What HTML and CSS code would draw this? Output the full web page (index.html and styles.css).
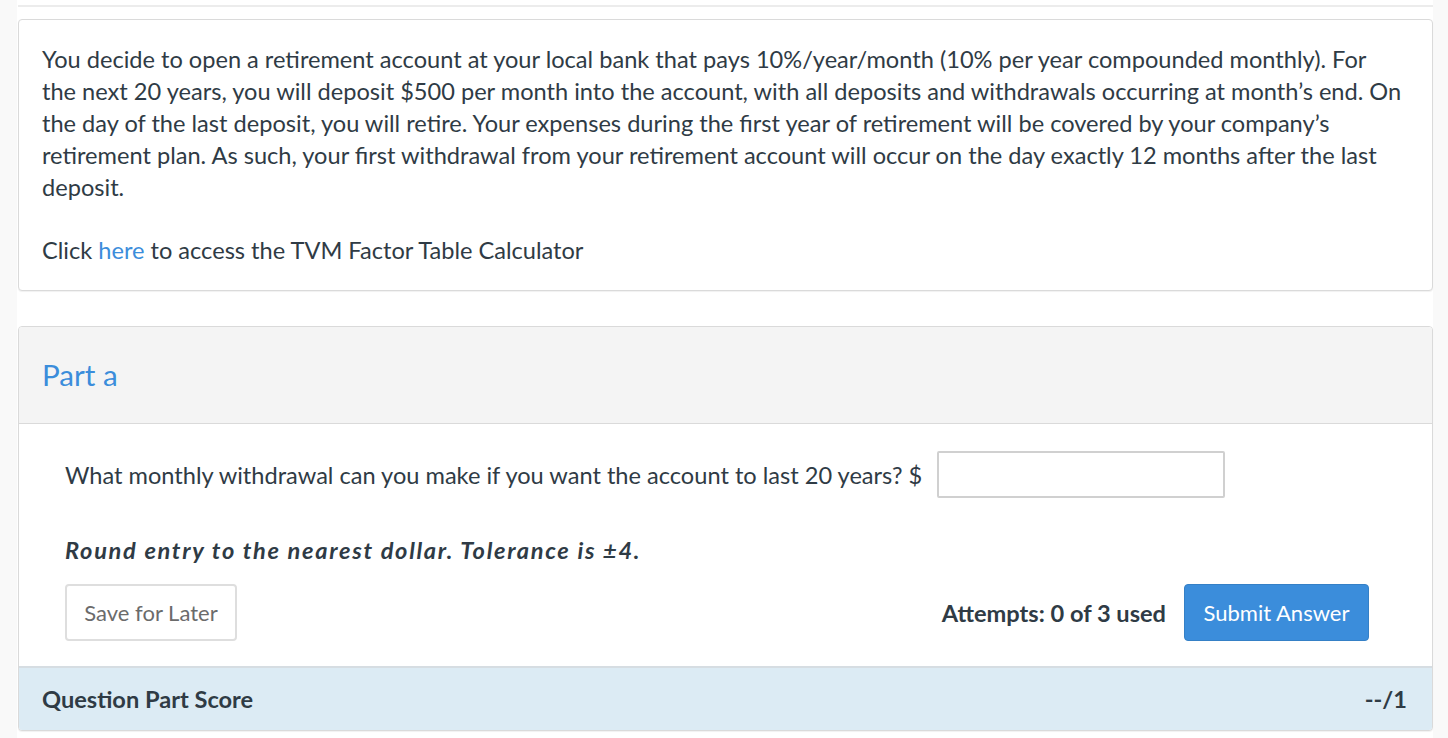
FILE: index.html
```html
<!DOCTYPE html>
<html>
<head>
<meta charset="utf-8">
<link rel="stylesheet" href="styles.css">
</head>
<body>
<div class="page">
  <div class="topline"></div>
  <div class="card intro">
    <p>You decide to open a retirement account at your local bank that pays 10%/year/month (10% per year compounded monthly). For the next 20 years, you will deposit $500 per month into the account, with all deposits and withdrawals occurring at month’s end. On the day of the last deposit, you will retire. Your expenses during the first year of retirement will be covered by your company’s retirement plan. As such, your first withdrawal from your retirement account will occur on the day exactly 12 months after the last deposit.</p>
    <p class="click">Click <a href="#">here</a> to access the TVM Factor Table Calculator</p>
  </div>
  <div class="card part">
    <div class="part-head">Part a</div>
    <div class="part-body">
      <div class="question">
        <span>What monthly withdrawal can you make if you want the account to last 20 years? $</span>
        <input class="answer" type="text">
      </div>
      <div class="note">Round entry to the nearest dollar. Tolerance is ±4.</div>
      <div class="actions">
        <button class="btn save">Save for Later</button>
        <div class="right">
          <span class="attempts">Attempts: 0 of 3 used</span>
          <button class="btn submit">Submit Answer</button>
        </div>
      </div>
    </div>
    <div class="score">
      <span>Question Part Score</span>
      <span>--/1</span>
    </div>
  </div>
</div>
</body>
</html>
```
FILE: styles.css
```css
html, body {
  margin: 0;
  padding: 0;
  background: #f9f9f9;
}
body {
  font-family: Lato, "Open Sans", sans-serif;
  color: #2f3b45;
  font-size: 23.6px;
}
.page {
  margin: 0 15px 0 17px;
  background: #fff;
  min-height: 738px;
  padding: 5px 0 0 1px;
  box-sizing: border-box;
}
.topline {
  height: 2px;
  background: #ececec;
}
.card {
  border: 1px solid #dadada;
  border-radius: 4px;
  box-shadow: 0 1px 1px rgba(0,0,0,0.06);
  background: #fff;
}
.intro {
  margin-top: 12px;
  padding: 23px 28px 24px 23px;
}
.intro p {
  margin: 0;
  line-height: 32px;
}
.intro .click {
  margin-top: 31px;
}
.intro a {
  color: #3b8ddb;
  text-decoration: none;
}
.part {
  margin-top: 35px;
  overflow: hidden;
}
.part-head {
  background: #f4f4f4;
  border-bottom: 1px solid #dadada;
  height: 96px;
  line-height: 96px;
  padding-left: 23px;
  font-size: 29.6px;
  color: #3b8ddb;
}
.part-body {
  padding: 27px 63px 25px 46px;
}
.question {
  display: flex;
  align-items: center;
  gap: 15px;
}
.answer {
  width: 288px;
  height: 47px;
  box-sizing: border-box;
  border: 2px solid #d0d0d0;
  border-radius: 2px;
  font: inherit;
}
.note {
  margin-top: 38px;
  font-weight: bold;
  font-style: italic;
  letter-spacing: 1.7px;
  line-height: 28px;
}
.actions {
  margin-top: 20px;
  display: flex;
  justify-content: space-between;
  align-items: center;
}
.right {
  display: flex;
  align-items: center;
  gap: 18px;
}
.btn {
  font-family: Lato, "Open Sans", sans-serif;
  font-size: 22px;
  height: 57px;
  border-radius: 4px;
  padding: 0;
  cursor: pointer;
}
.save {
  background: #fff;
  color: #6b6b6b;
  border: 2px solid #dedede;
  width: 172px;
}
.attempts {
  font-weight: bold;
}
.submit {
  background: #3b8ddb;
  color: #fff;
  border: 1px solid #3580c6;
  width: 185px;
}
.score {
  background: #dcebf4;
  border-top: 2px solid #d6dde2;
  height: 62px;
  display: flex;
  justify-content: space-between;
  align-items: center;
  padding: 0 25px 0 23px;
  font-weight: bold;
}
```
